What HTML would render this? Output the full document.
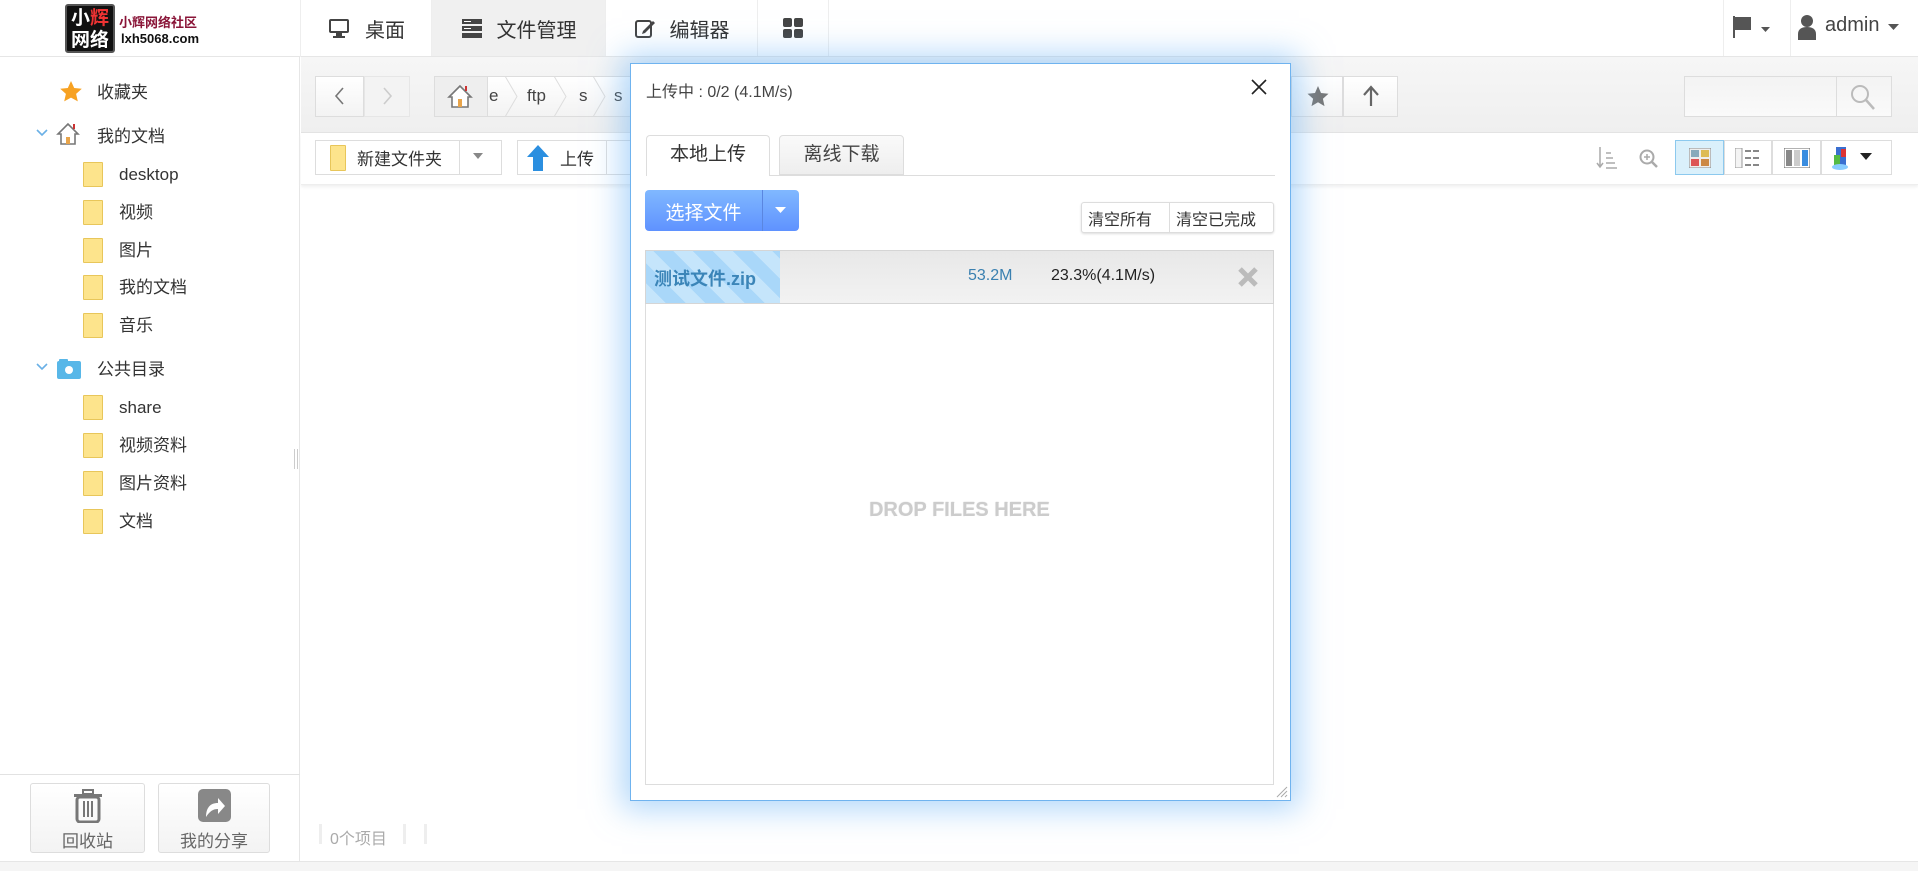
<!DOCTYPE html>
<html><head><meta charset="utf-8"><style>
*{box-sizing:border-box;margin:0;padding:0}
body{width:1918px;height:871px;overflow:hidden;background:#fff;font-family:"Liberation Sans","Noto Sans CJK SC",sans-serif;color:#333;position:relative}
.a{position:absolute}
.top{left:0;top:0;width:1918px;height:57px;border-bottom:1px solid #e6e6e6;background:#fff}
.nav{top:0;height:56px;display:flex;align-items:center;justify-content:center;font-size:20px;color:#333;border-right:1px solid #eee}
.side{left:0;top:57px;width:300px;height:804px;border-right:1px solid #e6e6e6}
.ti{position:absolute;font-size:17px;line-height:25px;color:#333;white-space:nowrap}
.fold{position:absolute;width:20px;height:25px;background:#fde48c;border:1px solid #e8c65a;border-radius:1px}
.btn{position:absolute;border:1px solid #ddd;background:linear-gradient(#fff,#f3f3f3)}
.tb1{left:301px;top:57px;width:1617px;height:76px;background:linear-gradient(#f6f6f6,#efefef);border-bottom:1px solid #e2e2e2}
.tb2{left:301px;top:133px;width:1617px;height:52px;background:#fff;border-bottom:1px solid #eee;box-shadow:0 2px 3px #f0f0f0}
</style></head><body>
<div class="a top"></div>
<!-- logo -->
<div class="a" style="left:65px;top:4px;width:50px;height:49px;background:#111;border-radius:3px;color:#fff;font-weight:bold;font-size:19px;line-height:22px;text-align:center;padding-top:2px;border:2px solid #555">小<span style="color:#e33">辉</span><br>网络</div>
<div class="a" style="left:119px;top:12px;font-size:13px;font-weight:bold;color:#8a1538">小辉网络社区</div>
<div class="a" style="left:121px;top:31px;font-size:13px;font-weight:bold;color:#111">lxh5068.com</div>
<div class="a" style="left:300px;top:0;width:1px;height:57px;background:#eee"></div>
<div class="a nav" style="left:301px;width:131px"><svg width="24" height="24" viewBox="0 0 24 24" style="margin-right:14px"><rect x="2" y="3" width="20" height="14" rx="2" fill="#444"/><rect x="4" y="5" width="16" height="10" fill="#fff"/><rect x="9" y="17" width="6" height="3" fill="#444"/><rect x="6" y="20" width="12" height="2" fill="#444"/></svg>桌面</div>
<div class="a nav" style="left:432px;width:174px;background:#f0f0f0"><svg width="22" height="22" viewBox="0 0 22 22" style="margin-right:14px"><rect x="1" y="2" width="20" height="5" fill="#444"/><rect x="1" y="9" width="20" height="5" fill="#444"/><rect x="1" y="16" width="20" height="5" fill="#444"/><rect x="3" y="4" width="7" height="1" fill="#fff"/><rect x="3" y="11" width="7" height="1" fill="#fff"/></svg>文件管理</div>
<div class="a nav" style="left:606px;width:152px"><svg width="22" height="22" viewBox="0 0 22 22" style="margin-right:14px"><rect x="2" y="4" width="15" height="16" rx="2" fill="none" stroke="#444" stroke-width="2"/><path d="M9 14l10-10 2 2-10 10-3 1z" fill="#444"/></svg>编辑器</div>
<div class="a nav" style="left:758px;width:71px"><svg width="20" height="20"><rect x="0" y="0" width="9" height="9" rx="2" fill="#444"/><rect x="11" y="0" width="9" height="9" rx="2" fill="#444"/><rect x="0" y="11" width="9" height="9" rx="2" fill="#444"/><rect x="11" y="11" width="9" height="9" rx="2" fill="#444"/></svg></div>
<div class="a" style="left:1723px;top:0;width:1px;height:56px;background:#eee"></div>
<div class="a" style="left:1790px;top:0;width:1px;height:56px;background:#eee"></div>
<svg class="a" style="left:1733px;top:15px" width="40" height="24"><rect x="0" y="1" width="2" height="22" fill="#555"/><path d="M2 2h16v13H2z" fill="#555"/><path d="M28 12h9l-4.5 5z" fill="#555"/></svg>
<svg class="a" style="left:1797px;top:14px" width="20" height="26"><circle cx="10" cy="7" r="6" fill="#555"/><path d="M1 26v-6c0-5 4-7 9-7s9 2 9 7v6z" fill="#555"/></svg>
<div class="a" style="left:1825px;top:14px;font-size:20px;color:#444">admin</div>
<svg class="a" style="left:1888px;top:24px" width="12" height="8"><path d="M0 0h11l-5.5 6z" fill="#555"/></svg>

<!-- sidebar -->
<div class="a side"></div>
<svg class="a" style="left:59px;top:80px" width="24" height="24" viewBox="0 0 24 24"><path d="M12 1l3.2 7 7.6.8-5.7 5.1 1.7 7.5L12 17.6 5.2 21.4l1.7-7.5L1.2 8.8 8.8 8z" fill="#f7a223"/></svg>
<div class="ti" style="left:97px;top:80px">收藏夹</div>
<svg class="a" style="left:36px;top:129px" width="12" height="8"><path d="M1 1l5 5 5-5" fill="none" stroke="#6ab0e6" stroke-width="1.6"/></svg>
<svg class="a" style="left:56px;top:122px" width="24" height="24"><path d="M12 2L2 12h3v10h14V12h3z" fill="#fff" stroke="#777" stroke-width="1.6"/><rect x="10" y="15" width="4" height="7" fill="#e8a44a"/><rect x="17" y="2" width="2" height="5" fill="#c33"/></svg>
<div class="ti" style="left:97px;top:124px">我的文档</div>
<div class="fold" style="left:83px;top:162px"></div><div class="ti" style="left:119px;top:162px">desktop</div>
<div class="fold" style="left:83px;top:200px"></div><div class="ti" style="left:119px;top:200px">视频</div>
<div class="fold" style="left:83px;top:238px"></div><div class="ti" style="left:119px;top:238px">图片</div>
<div class="fold" style="left:83px;top:275px"></div><div class="ti" style="left:119px;top:275px">我的文档</div>
<div class="fold" style="left:83px;top:313px"></div><div class="ti" style="left:119px;top:313px">音乐</div>
<svg class="a" style="left:36px;top:363px" width="12" height="8"><path d="M1 1l5 5 5-5" fill="none" stroke="#6ab0e6" stroke-width="1.6"/></svg>
<svg class="a" style="left:56px;top:358px" width="26" height="22"><rect x="1" y="3" width="24" height="18" rx="2" fill="#58b7e8"/><rect x="3" y="1" width="9" height="4" rx="1" fill="#58b7e8"/><circle cx="13" cy="12" r="4" fill="#fff"/></svg>
<div class="ti" style="left:97px;top:357px">公共目录</div>
<div class="fold" style="left:83px;top:395px"></div><div class="ti" style="left:119px;top:395px">share</div>
<div class="fold" style="left:83px;top:433px"></div><div class="ti" style="left:119px;top:433px">视频资料</div>
<div class="fold" style="left:83px;top:471px"></div><div class="ti" style="left:119px;top:471px">图片资料</div>
<div class="fold" style="left:83px;top:509px"></div><div class="ti" style="left:119px;top:509px">文档</div>
<div class="a" style="left:294px;top:449px;width:4px;height:20px;border-left:1px solid #ccc;border-right:1px solid #ccc"></div>
<div class="a" style="left:0;top:774px;width:300px;height:1px;background:#e2e2e2"></div>
<div class="btn" style="left:30px;top:783px;width:115px;height:70px;border-radius:3px"></div>
<svg class="a" style="left:73px;top:789px" width="30" height="34"><rect x="4" y="8" width="22" height="25" rx="3" fill="none" stroke="#777" stroke-width="3"/><rect x="1" y="5" width="28" height="3" fill="#777"/><rect x="10" y="1" width="10" height="4" fill="none" stroke="#777" stroke-width="2"/><rect x="10" y="12" width="2" height="16" fill="#777"/><rect x="14" y="12" width="2" height="16" fill="#777"/><rect x="18" y="12" width="2" height="16" fill="#777"/></svg>
<div class="a" style="left:30px;top:827px;width:115px;text-align:center;font-size:17px;color:#666">回收站</div>
<div class="btn" style="left:158px;top:783px;width:112px;height:70px;border-radius:3px"></div>
<svg class="a" style="left:198px;top:789px" width="33" height="33"><rect x="0" y="0" width="33" height="33" rx="5" fill="#888"/><path d="M8 28c0-9 4-14 12-14v-5l7 8-7 8v-5c-5 0-8 2-12 8z" fill="#fff"/></svg>
<div class="a" style="left:158px;top:827px;width:112px;text-align:center;font-size:17px;color:#666">我的分享</div>
<div class="a" style="left:0;top:861px;width:1918px;height:10px;background:#f5f5f5;border-top:1px solid #e6e6e6"></div>

<!-- toolbar -->
<div class="a tb1"></div>
<div class="btn" style="left:315px;top:76px;width:49px;height:41px"></div>
<svg class="a" style="left:333px;top:86px" width="12" height="20"><path d="M10 2L3 10l7 8" fill="none" stroke="#777" stroke-width="1.6"/></svg>
<div class="btn" style="left:364px;top:76px;width:46px;height:41px;background:#f3f3f3;border-color:#e6e6e6"></div>
<svg class="a" style="left:382px;top:86px" width="12" height="20"><path d="M2 2l7 8-7 8" fill="none" stroke="#ccc" stroke-width="1.6"/></svg>
<div class="btn" style="left:434px;top:76px;width:910px;height:41px"></div>
<div class="a" style="left:434px;top:76px;width:54px;height:41px;background:#eee;border:1px solid #ddd"></div>
<svg class="a" style="left:447px;top:84px" width="26" height="24"><path d="M13 2L2 13h3v10h16V13h3z" fill="#fff" stroke="#777" stroke-width="1.6"/><rect x="11" y="15" width="4" height="8" fill="#e8a44a"/><rect x="18" y="2" width="2" height="5" fill="#c33"/></svg>
<div class="a" style="left:489px;top:86px;font-size:17px;color:#444">e</div>
<div class="a" style="left:527px;top:86px;font-size:17px;color:#444">ftp</div>
<div class="a" style="left:579px;top:86px;font-size:17px;color:#444">s</div>
<div class="a" style="left:614px;top:86px;font-size:17px;color:#444">s</div>
<svg class="a" style="left:500px;top:76px" width="140" height="41"><path d="M5 0l12 20.5L5 41M54 0l12 20.5L54 41M93 0l12 20.5L93 41" fill="none" stroke="#ddd"/></svg>
<div class="btn" style="left:1291px;top:76px;width:52px;height:41px"></div>
<svg class="a" style="left:1306px;top:84px" width="24" height="24"><path d="M12 2l3 7 7.5.7-5.6 5 1.6 7.4L12 18.3 5.5 22.1l1.6-7.4-5.6-5L9 9z" fill="#777"/></svg>
<div class="btn" style="left:1343px;top:76px;width:55px;height:41px"></div>
<svg class="a" style="left:1361px;top:84px" width="20" height="24"><path d="M10 22V4M3 11l7-8 7 8" fill="none" stroke="#666" stroke-width="2.2"/></svg>
<div class="btn" style="left:1684px;top:76px;width:208px;height:41px;background:linear-gradient(#f3f3f3,#fafafa)"></div>
<div class="a" style="left:1836px;top:76px;width:1px;height:41px;background:#ddd"></div>
<svg class="a" style="left:1849px;top:83px" width="28" height="28"><circle cx="11" cy="11" r="8" fill="none" stroke="#bbb" stroke-width="2"/><path d="M17 17l8 9" stroke="#bbb" stroke-width="2.5"/></svg>

<div class="a tb2"></div>
<div class="btn" style="left:315px;top:140px;width:187px;height:35px;background:#fff"></div>
<div class="fold" style="left:330px;top:145px;height:26px;width:16px"></div>
<div class="a" style="left:357px;top:145px;font-size:17px">新建文件夹</div>
<div class="a" style="left:459px;top:140px;width:1px;height:35px;background:#ddd"></div>
<svg class="a" style="left:473px;top:153px" width="12" height="8"><path d="M0 0h10l-5 6z" fill="#888"/></svg>
<div class="btn" style="left:517px;top:140px;width:115px;height:35px;background:#fff"></div>
<svg class="a" style="left:526px;top:144px" width="24" height="28"><path d="M12 1L1 13h6v14h10V13h6z" fill="#2b8fe0"/></svg>
<div class="a" style="left:560px;top:145px;font-size:17px">上传</div>
<div class="a" style="left:606px;top:140px;width:1px;height:35px;background:#ddd"></div>
<svg class="a" style="left:1596px;top:145px" width="22" height="26"><path d="M4 2v20M1 18l3 4 3-4" fill="none" stroke="#aaa" stroke-width="1.5"/><path d="M10 8h5M10 13h7M10 18h9M10 23h11" stroke="#aaa" stroke-width="1.5"/></svg>
<svg class="a" style="left:1638px;top:148px" width="22" height="22"><circle cx="9" cy="9" r="6.5" fill="none" stroke="#aaa" stroke-width="2"/><path d="M14 14l5 5" stroke="#aaa" stroke-width="2.5"/><path d="M6 9h6M9 6v6" stroke="#aaa" stroke-width="1.5"/></svg>
<div class="a" style="left:1675px;top:140px;width:49px;height:35px;background:#daf0fb;border:1px solid #8cc9ee"></div>
<svg class="a" style="left:1689px;top:148px" width="22" height="20"><rect x="0" y="0" width="22" height="20" fill="#eee" stroke="#888"/><rect x="2" y="2" width="8" height="7" fill="#8ab"/><rect x="12" y="2" width="8" height="7" fill="#db5"/><rect x="2" y="11" width="8" height="7" fill="#d55"/><rect x="12" y="11" width="8" height="7" fill="#c84"/></svg>
<div class="btn" style="left:1724px;top:140px;width:48px;height:35px;background:#fff"></div>
<svg class="a" style="left:1735px;top:148px" width="26" height="20"><rect x="0" y="0" width="7" height="20" fill="#f4f4f4" stroke="#999"/><path d="M10 3h6M18 3h6M10 10h6M18 10h6M10 17h6M18 17h6" stroke="#888" stroke-width="2"/></svg>
<div class="btn" style="left:1772px;top:140px;width:49px;height:35px;background:#fff"></div>
<svg class="a" style="left:1784px;top:148px" width="26" height="20"><rect x="0" y="0" width="26" height="20" fill="#fff" stroke="#666"/><rect x="2" y="2" width="6" height="16" fill="#888"/><rect x="10" y="2" width="6" height="16" fill="#ccc"/><rect x="18" y="2" width="6" height="16" fill="#3a8de0"/></svg>
<div class="btn" style="left:1821px;top:140px;width:71px;height:35px;background:#fff"></div>
<svg class="a" style="left:1832px;top:145px" width="48" height="26"><rect x="4" y="2" width="10" height="18" fill="#3a6fd0"/><rect x="2" y="10" width="6" height="10" fill="#5b4"/><rect x="9" y="4" width="5" height="8" fill="#d33"/><ellipse cx="8" cy="22" rx="8" ry="3" fill="#8cf"/><path d="M28 8h12l-6 7z" fill="#222"/></svg>
<div class="a" style="left:330px;top:825px;font-size:16px;color:#aaa">0个项目</div>
<div class="a" style="left:319px;top:824px;width:3px;height:20px;background:#eee"></div>
<div class="a" style="left:403px;top:824px;width:3px;height:20px;background:#eee"></div>
<div class="a" style="left:424px;top:824px;width:3px;height:20px;background:#eee"></div>

<!-- dialog -->
<div class="a" style="left:630px;top:63px;width:661px;height:738px;background:#fff;border:1px solid #6fb3ef;box-shadow:0 0 30px 8px rgba(110,180,245,.55)"></div>
<div class="a" style="left:646px;top:78px;font-size:16px;color:#444">上传中 : 0/2 (4.1M/s)</div>
<svg class="a" style="left:1251px;top:79px" width="16" height="16"><path d="M1 1l14 14M15 1L1 15" stroke="#222" stroke-width="1.6"/></svg>
<div class="a" style="left:646px;top:175px;width:629px;height:1px;background:#ddd"></div>
<div class="a" style="left:646px;top:135px;width:124px;height:41px;background:#fff;border:1px solid #ddd;border-bottom:none;border-radius:4px 4px 0 0;font-size:19px;text-align:center;line-height:38px">本地上传</div>
<div class="a" style="left:779px;top:135px;width:125px;height:40px;background:linear-gradient(#fafafa,#eee);border:1px solid #ddd;border-radius:4px 4px 0 0;font-size:19px;text-align:center;line-height:38px;color:#444">离线下载</div>
<div class="a" style="left:645px;top:190px;width:154px;height:41px;border-radius:4px;background:linear-gradient(#80b8ff,#5f92ff)"></div>
<div class="a" style="left:645px;top:198px;width:117px;text-align:center;color:#fff;font-size:19px">选择文件</div>
<div class="a" style="left:762px;top:190px;width:1px;height:41px;background:#5a86e0"></div>
<svg class="a" style="left:775px;top:207px" width="12" height="8"><path d="M0 0h11l-5.5 6z" fill="#fff"/></svg>
<div class="a" style="left:1081px;top:202px;width:193px;height:31px;border:1px solid #ddd;border-radius:3px;background:#fff;box-shadow:0 1px 2px #ddd"></div>
<div class="a" style="left:1169px;top:202px;width:1px;height:31px;background:#ddd"></div>
<div class="a" style="left:1088px;top:206px;font-size:16px">清空所有</div>
<div class="a" style="left:1176px;top:206px;font-size:16px">清空已完成</div>
<div class="a" style="left:645px;top:250px;width:629px;height:535px;border:1px solid #ddd"></div>
<div class="a" style="left:645px;top:250px;width:629px;height:54px;background:linear-gradient(#e8e8e8,#f2f2f2);border:1px solid #d5d5d5"></div>
<div class="a" style="left:646px;top:251px;width:134px;height:52px;background:repeating-linear-gradient(45deg,#c5e5fb 0 14px,#a9d7f9 14px 28px)"></div>
<div class="a" style="left:654px;top:265px;font-size:18px;font-weight:bold;color:#3b85b8">测试文件.zip</div>
<div class="a" style="left:968px;top:267px;font-size:16px;color:#3a80b0">53.2M</div>
<div class="a" style="left:1051px;top:267px;font-size:16px;color:#222">23.3%(4.1M/s)</div>
<svg class="a" style="left:1238px;top:267px" width="20" height="20"><path d="M2 2l16 16M18 2L2 18" stroke="#bbb" stroke-width="5"/></svg>
<div class="a" style="left:645px;top:499px;width:629px;text-align:center;font-size:20px;font-weight:bold;color:#ccc;text-shadow:1px 1px 0 #fff,0 0 1px #bbb">DROP FILES HERE</div>
<svg class="a" style="left:1276px;top:786px" width="12" height="12"><path d="M11 1L1 11M11 5L5 11M11 9l-2 2" stroke="#aaa"/></svg>
</body></html>
